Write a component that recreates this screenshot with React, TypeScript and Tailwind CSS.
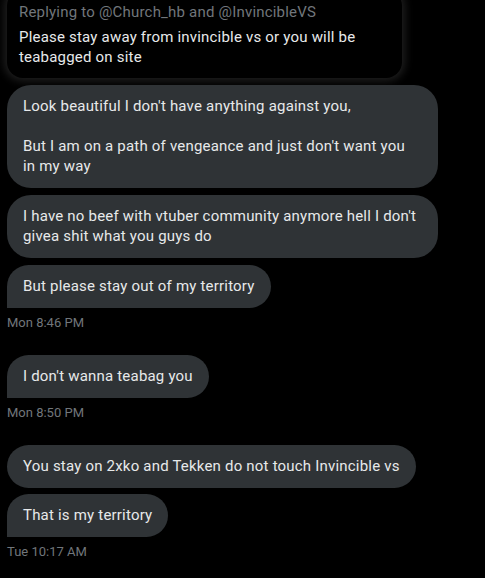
import React from 'react';

// received message bubble, left aligned
function Bubble({ children, last, wide }: { children: React.ReactNode; last?: boolean; wide?: boolean }) {
  return (
    <div
      className={`bg-[#2f3336] text-[#e7e9ea] px-4 pt-[11px] pb-3 text-[15px] leading-5 tracking-[0.2px] rounded-[24px] ${
        last ? 'rounded-bl-none' : ''
      } ${wide ? 'w-[431px]' : 'w-fit'}`}
    >
      {children}
    </div>
  );
}

function Stamp({ text }: { text: string }) {
  return <div className="text-[13px] leading-4 text-[#71767b] mt-[7px]">{text}</div>;
}

export default function App() {
  return (
    <div
      className="bg-black min-h-[578px] w-[485px] overflow-hidden px-[7px]"
      style={{ fontFamily: '"Segoe UI", Roboto, "Liberation Sans", sans-serif' }}
    >
      {/* quoted tweet the reply points at */}
      <div className="-mt-[10px] w-[395px] rounded-2xl bg-black px-3 pt-3 pb-[11px] tracking-[0.2px] shadow-[0_0_8px_3px_rgba(255,255,255,0.12)]">
        <div className="text-[15px] leading-5 text-[#71767b] mb-[5px]">Replying to @Church_hb and @InvincibleVS</div>
        <div className="text-[15px] leading-5 text-[#e7e9ea]">
          Please stay away from invincible vs or you will be
          <br />
          teabagged on site
        </div>
      </div>

      <div className="flex flex-col gap-[7px] mt-[7px]">
        <Bubble wide>
          Look beautiful I don't have anything against you,
          <br />
          <br />
          But I am on a path of vengeance and just don't want you
          <br />
          in my way
        </Bubble>
        <Bubble wide>
          I have no beef with vtuber community anymore hell I don't
          <br />
          givea shit what you guys do
        </Bubble>
        <Bubble last>But please stay out of my territory</Bubble>
      </div>
      <Stamp text="Mon 8:46 PM" />

      <div className="mt-[24px]">
        <Bubble last>I don't wanna teabag you</Bubble>
      </div>
      <Stamp text="Mon 8:50 PM" />

      <div className="flex flex-col gap-[6px] mt-[24px]">
        <Bubble>You stay on 2xko and Tekken do not touch Invincible vs</Bubble>
        <Bubble last>That is my territory</Bubble>
      </div>
      <Stamp text="Tue 10:17 AM" />
    </div>
  );
}
